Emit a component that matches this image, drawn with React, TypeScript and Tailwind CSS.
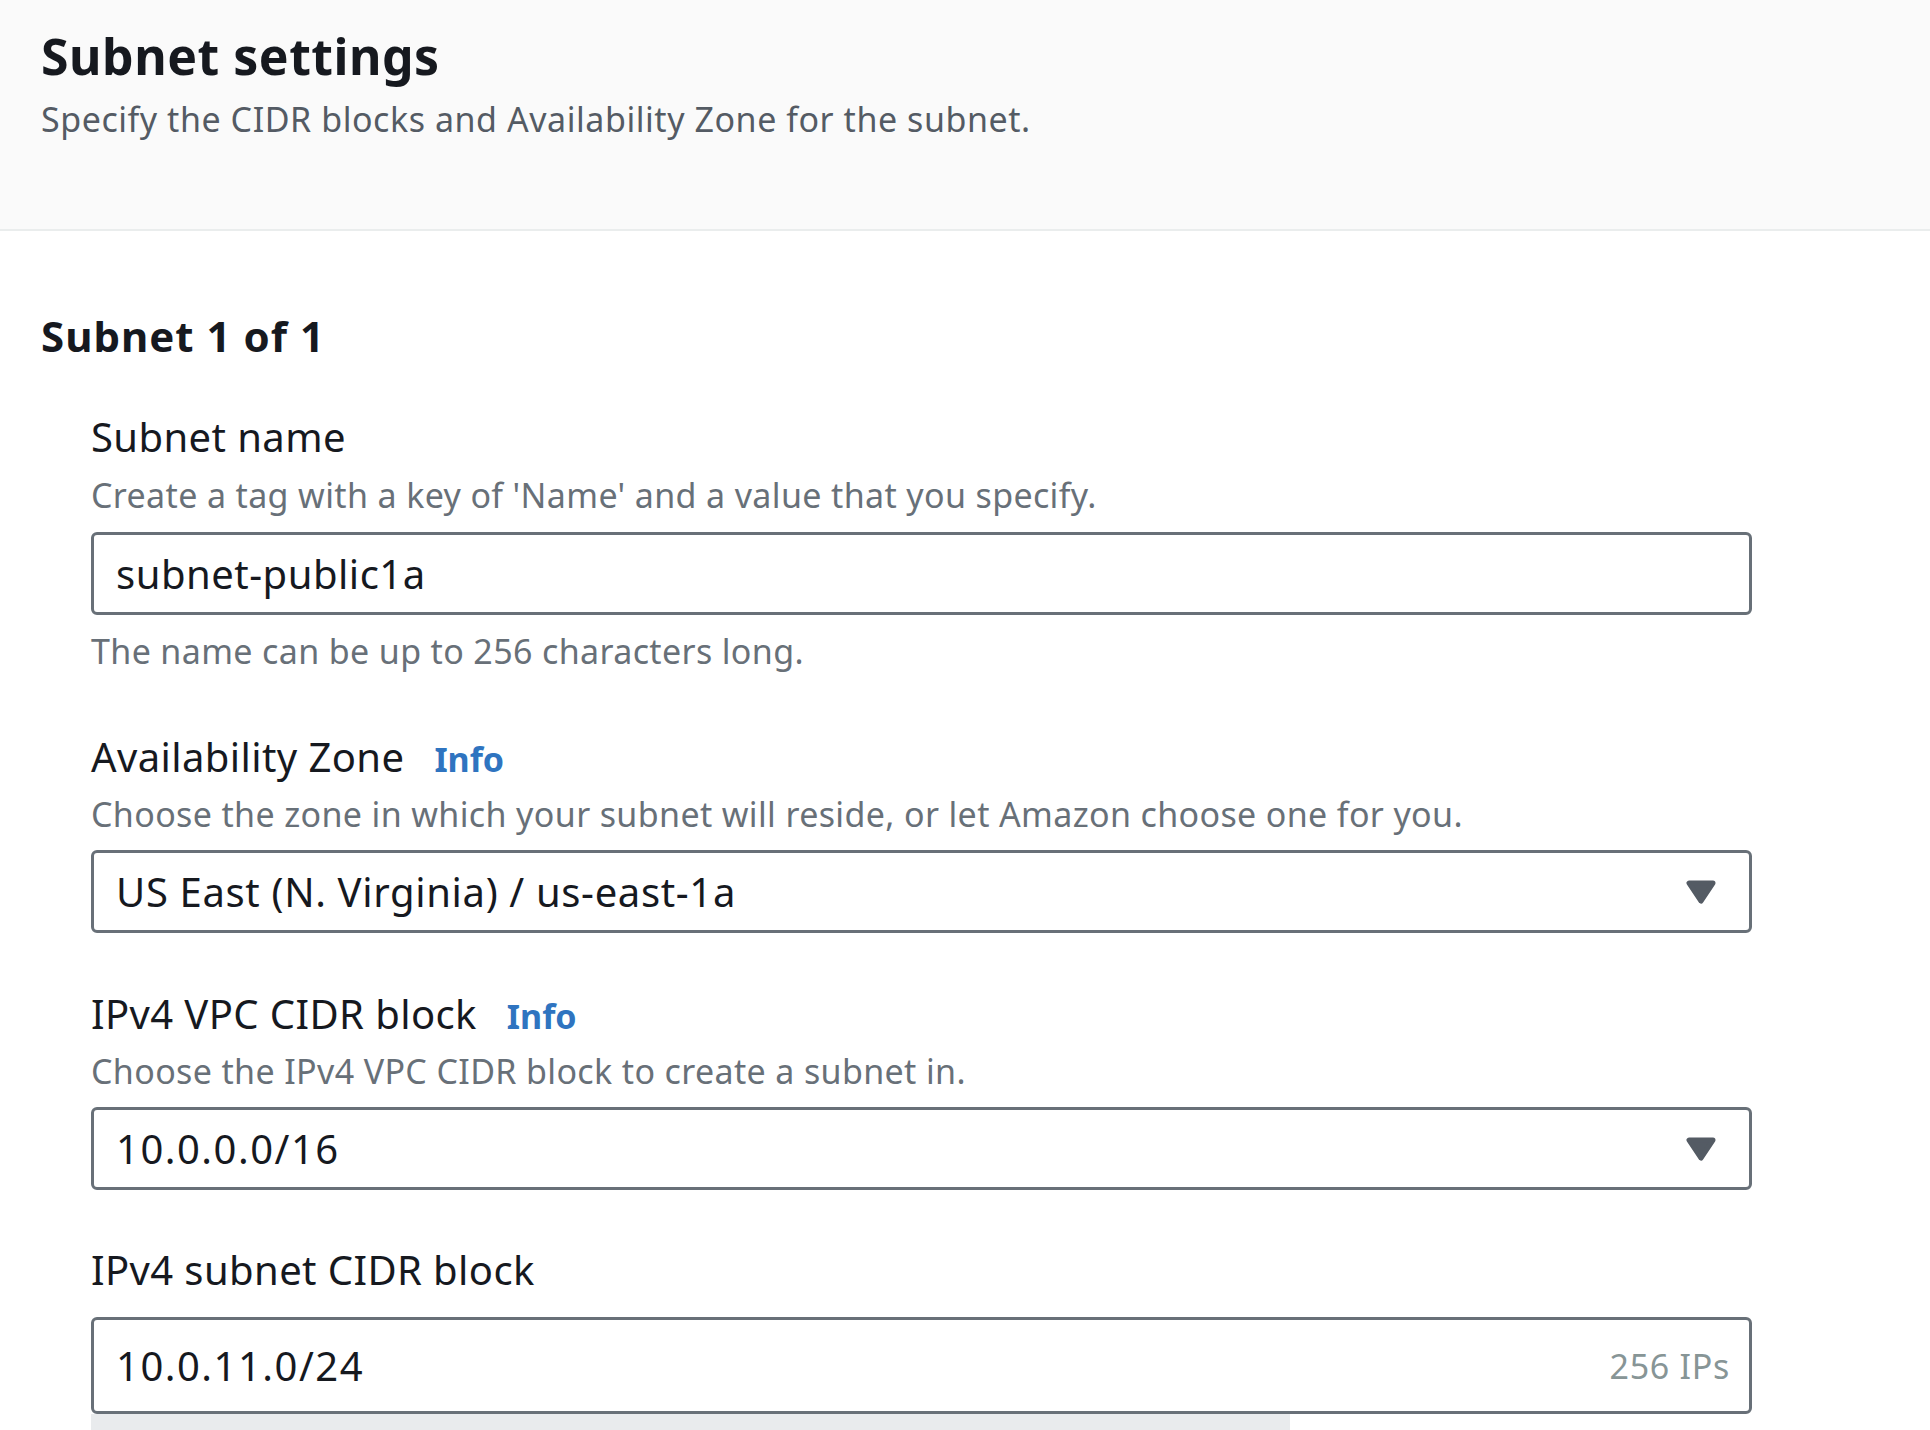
import React from 'react';

function Caret() {
  return (
    <svg width="30" height="24" viewBox="0 0 30 24" className="shrink-0">
      <polygon
        points="3,3 27,3 15,21"
        fill="#545b64"
        stroke="#545b64"
        strokeWidth="5"
        strokeLinejoin="round"
      />
    </svg>
  );
}

function Label({ text, info }: { text: string; info?: boolean }) {
  return (
    <div className="flex items-baseline gap-[30px]">
      <span className="text-[40px] leading-[56px] tracking-[0.4px] text-[#16191f]">
        {text}
      </span>
      {info && (
        <span className="text-[34px] font-bold leading-[48px] text-[#2f74c0]">
          Info
        </span>
      )}
    </div>
  );
}

function Desc({ text, className = '' }: { text: string; className?: string }) {
  return (
    <p
      className={`text-[34px] leading-[48px] tracking-[0.36px] text-[#687078] ${className}`}
    >
      {text}
    </p>
  );
}

function SelectBox({ value, digits }: { value: string; digits?: boolean }) {
  return (
    <div className="flex h-[83px] items-center justify-between rounded-[6px] border-[3px] border-[#687078] bg-white pl-[22px] pr-[33px]">
      <span
        className={`text-[40px] leading-[56px] text-[#16191f] ${
          digits ? 'tracking-[1.5px]' : 'tracking-[0.65px]'
        }`}
      >
        {value}
      </span>
      <Caret />
    </div>
  );
}

export default function App() {
  return (
    <div
      className="min-h-screen bg-white"
      style={{ fontFamily: '"Noto Sans", "Open Sans", sans-serif' }}
    >
      {/* header */}
      <div className="h-[231px] border-b-2 border-[#eaeded] bg-[#fafafa] px-[41px] pt-[24px]">
        <h1 className="text-[50px] font-bold leading-[64px] tracking-[0.5px] text-[#16191f]">
          Subnet settings
        </h1>
        <p className="mt-[7px] text-[34px] leading-[48px] tracking-[0.55px] text-[#545b64]">
          Specify the CIDR blocks and Availability Zone for the subnet.
        </p>
      </div>

      {/* body */}
      <div className="px-[41px] pt-[77px]">
        <h2 className="text-[42px] font-bold leading-[56px] tracking-[1px] text-[#16191f]">
          Subnet 1 of 1
        </h2>

        <div className="ml-[50px] w-[1661px]">
          {/* subnet name */}
          <div className="mt-[45px]">
            <Label text="Subnet name" />
            <Desc
              className="mt-[6px]"
              text="Create a tag with a key of 'Name' and a value that you specify."
            />
            <div className="mt-[13px] flex h-[83px] items-center rounded-[6px] border-[3px] border-[#687078] bg-white px-[22px]">
              <span className="text-[40px] leading-[56px] tracking-[0.5px] text-[#16191f]">
                subnet-public1a
              </span>
            </div>
            <Desc
              className="mt-[12px]"
              text="The name can be up to 256 characters long."
            />
          </div>

          {/* availability zone */}
          <div className="mt-[54px]">
            <Label text="Availability Zone" info />
            <Desc
              className="mt-[5px]"
              text="Choose the zone in which your subnet will reside, or let Amazon choose one for you."
            />
            <div className="mt-[12px]">
              <SelectBox value="US East (N. Virginia) / us-east-1a" />
            </div>
          </div>

          {/* vpc cidr */}
          <div className="mt-[53px]">
            <Label text="IPv4 VPC CIDR block" info />
            <Desc
              className="mt-[5px]"
              text="Choose the IPv4 VPC CIDR block to create a subnet in."
            />
            <div className="mt-[12px]">
              <SelectBox value="10.0.0.0/16" digits />
            </div>
          </div>

          {/* subnet cidr */}
          <div className="mt-[52px]">
            <Label text="IPv4 subnet CIDR block" />
            <div className="mt-[19px] flex h-[97px] items-center rounded-[6px] border-[3px] border-[#687078] bg-white pl-[22px] pr-[19px]">
              <span className="text-[40px] leading-[56px] tracking-[1.5px] text-[#16191f]">
                10.0.11.0/24
              </span>
              <span className="ml-auto text-[34px] leading-[48px] tracking-[0.7px] text-[#879596]">
                256 IPs
              </span>
            </div>
            <div className="h-[17px] w-[1199px] bg-[#e9ebed]" />
          </div>
        </div>
      </div>
    </div>
  );
}
